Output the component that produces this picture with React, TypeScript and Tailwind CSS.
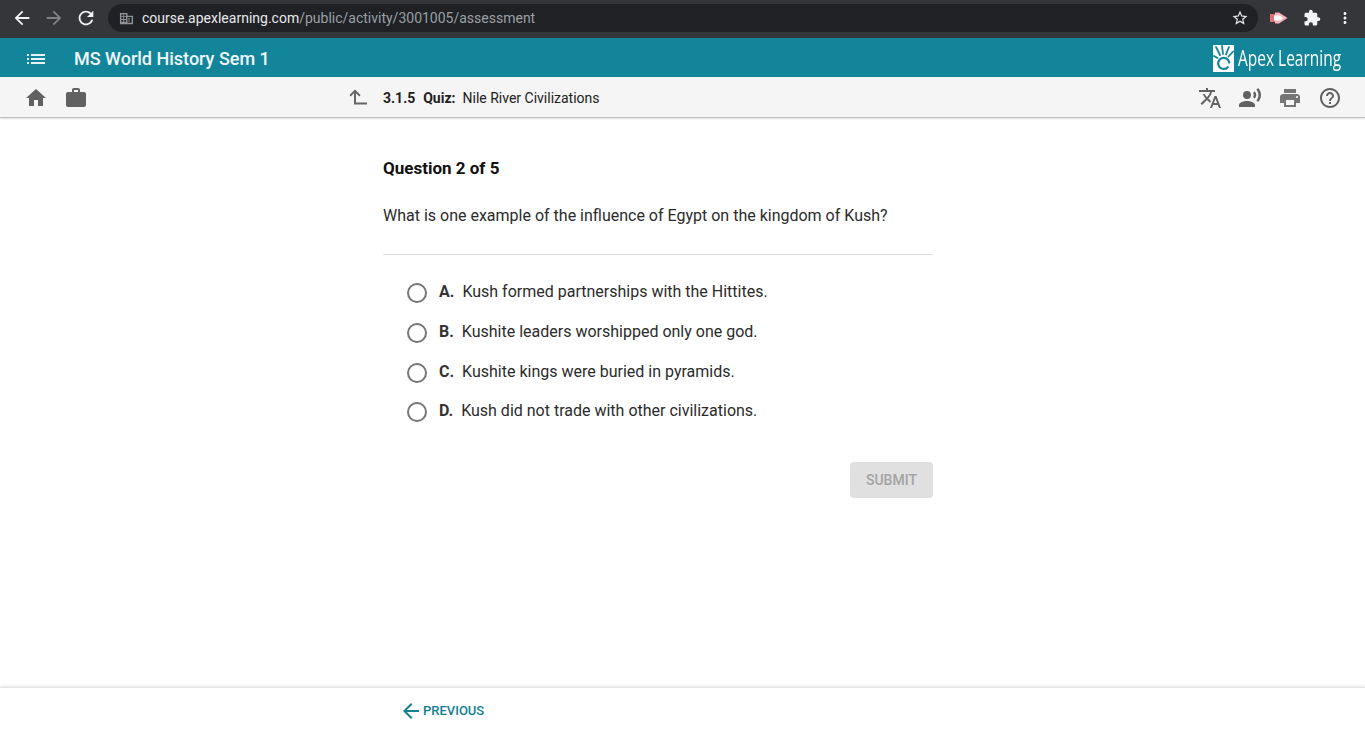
const options = [
  { letter: 'A.', text: 'Kush formed partnerships with the Hittites.' },
  { letter: 'B.', text: 'Kushite leaders worshipped only one god.' },
  { letter: 'C.', text: 'Kushite kings were buried in pyramids.' },
  { letter: 'D.', text: 'Kush did not trade with other civilizations.' },
];

function Icon({ d, className }: { d: string; className: string }) {
  return (
    <svg viewBox="0 0 24 24" className={className} fill="currentColor">
      <path d={d} />
    </svg>
  );
}

const paths = {
  back: 'M20 11H7.83l5.59-5.59L12 4l-8 8 8 8 1.41-1.41L7.83 13H20v-2z',
  forward: 'M12 4l-1.41 1.41L16.17 11H4v2h12.17l-5.58 5.59L12 20l8-8z',
  refresh:
    'M17.65 6.35C16.2 4.9 14.21 4 12 4c-4.42 0-7.99 3.58-7.99 8s3.57 8 7.99 8c3.73 0 6.84-2.55 7.73-6h-2.08c-.82 2.33-3.04 4-5.65 4-3.31 0-6-2.69-6-6s2.69-6 6-6c1.66 0 3.14.69 4.22 1.78L13 11h7V4l-2.35 2.35z',
  list: 'M3 13h2v-2H3v2zm0 4h2v-2H3v2zm0-8h2V7H3v2zm4 4h14v-2H7v2zm0 4h14v-2H7v2zM7 7v2h14V7H7z',
  home: 'M10 20v-6h4v6h5v-8h3L12 3 2 12h3v8z',
  work: 'M20 6h-4V4c0-1.11-.89-2-2-2h-4c-1.11 0-2 .89-2 2v2H4c-1.11 0-1.99.89-1.99 2L2 19c0 1.11.89 2 2 2h16c1.11 0 2-.89 2-2V8c0-1.11-.89-2-2-2zm-6 0h-4V4h4v2z',
  translate:
    'M12.87 15.07l-2.54-2.51.03-.03c1.74-1.94 2.98-4.17 3.71-6.53H17V4h-7V2H8v2H1v1.99h11.17C11.5 7.92 10.44 9.75 9 11.35 8.07 10.32 7.3 9.19 6.69 8h-2c.73 1.63 1.73 3.17 2.98 4.56l-5.09 5.02L4 19l5-5 3.11 3.11.76-2.04zM18.5 10h-2L12 22h2l1.12-3h4.75L21 22h2l-4.5-12zm-2.62 7l1.62-4.33L19.12 17h-3.24z',
  voice:
    'M5 9a4 4 0 1 0 8 0a4 4 0 1 0-8 0zM9 15c-2.67 0-8 1.34-8 4v2h16v-2c0-2.66-5.33-4-8-4zm7.76-9.64l-1.68 1.69c.84 1.18.84 2.71 0 3.89l1.68 1.69c2.02-2.02 2.02-5.07 0-7.27zM20.07 2l-1.63 1.63c2.77 3.02 2.77 7.56 0 10.74L20.07 16c3.9-3.89 3.91-9.95 0-14z',
  print:
    'M19 8H5c-1.66 0-3 1.34-3 3v6h4v4h12v-4h4v-6c0-1.66-1.34-3-3-3zm-3 11H8v-5h8v5zm3-7c-.55 0-1-.45-1-1s.45-1 1-1 1 .45 1 1-.45 1-1 1zm-1-9H6v4h12V3z',
  help: 'M11 18h2v-2h-2v2zm1-16C6.48 2 2 6.48 2 12s4.48 10 10 10 10-4.48 10-10S17.52 2 12 2zm0 18c-4.41 0-8-3.59-8-8s3.59-8 8-8 8 3.59 8 8-3.59 8-8 8zm0-14c-2.21 0-4 1.79-4 4h2c0-1.1.9-2 2-2s2 .9 2 2c0 2-3 1.75-3 5h2c0-2.25 3-2.5 3-5 0-2.21-1.79-4-4-4z',
  extension:
    'M20.5 11H19V7c0-1.1-.9-2-2-2h-4V3.5C13 2.12 11.88 1 10.5 1S8 2.12 8 3.5V5H4c-1.1 0-1.99.9-1.99 2v3.8H3.5c1.49 0 2.7 1.21 2.7 2.7s-1.21 2.7-2.7 2.7H2V20c0 1.1.9 2 2 2h3.8v-1.5c0-1.49 1.21-2.7 2.7-2.7 1.49 0 2.7 1.21 2.7 2.7V22H17c1.1 0 2-.9 2-2v-4h1.5c1.38 0 2.5-1.12 2.5-2.5S21.88 11 20.5 11z',
  star: 'M22 9.24l-7.19-.62L12 2 9.19 8.63 2 9.24l5.46 4.73L5.82 21 12 17.27 18.18 21l-1.63-7.03L22 9.24zM12 15.4l-3.76 2.27 1-4.28-3.32-2.88 4.38-.38L12 6.1l1.71 4.04 4.38.38-3.32 2.88 1 4.28L12 15.4z',
  dots: 'M12 8c1.1 0 2-.9 2-2s-.9-2-2-2-2 .9-2 2 .9 2 2 2zm0 2c-1.1 0-2 .9-2 2s.9 2 2 2 2-.9 2-2-.9-2-2-2zm0 6c-1.1 0-2 .9-2 2s.9 2 2 2 2-.9 2-2-.9-2-2-2z',
  up: 'M9 3.5L3.4 9.1l1.4 1.4L8 7.3V18.5h13v-2H10V7.3l3.2 3.2 1.4-1.4z',
};

function ApexLogo() {
  return (
    <svg viewBox="0 0 21 27" className="w-[21px] h-[27px] shrink-0">
      <rect width="21" height="27" fill="#ffffff" />
      <g stroke="#12859b" strokeWidth="1.8" strokeLinecap="round" fill="none">
        <path d="M7 10L3 2M10 9L9 1M13 9.5L16 2M15.5 11.5L20 6.5M4.5 13L1 11" />
        <path d="M14.8 22.2A5.6 5.6 0 1 1 16.2 17.5" strokeWidth="2.2" />
      </g>
    </svg>
  );
}

export default function App() {
  return (
    <div className="h-[734px] flex flex-col bg-white overflow-hidden font-['Roboto',sans-serif] text-[#212121]">
      <div className="h-[38px] shrink-0 bg-[#35363a] pb-[2px] flex items-center">
        <Icon d={paths.back} className="w-[22px] h-[22px] ml-[11px] text-[#f1f3f4]" />
        <Icon d={paths.forward} className="w-[22px] h-[22px] ml-[10px] text-[#7f8184]" />
        <Icon d={paths.refresh} className="w-[22px] h-[22px] ml-[10px] text-[#f1f3f4]" />
        <div className="ml-[11px] w-[1150px] h-7 rounded-full bg-[#202124] flex items-center">
          <svg viewBox="0 0 16 16" className="w-[15px] h-[15px] ml-[11px] text-[#8f9398]" fill="currentColor">
            <path d="M1 2h8v3h6v9H1zM2.5 3.5v2h2v-2zm3 0v2h2v-2zm-3 3v2h2v-2zm3 0v2h2v-2zm-3 3v2h2v-2zm3 0v2h2v-2zM9 6.5v6h4.5v-6zm1 1h1.5v1.5H10zm0 2.5h1.5v1.5H10z" />
          </svg>
          <span className="ml-2 text-sm text-[#e8eaed]">
            course.apexlearning.com<span className="text-[#9aa0a6]">/public/activity/3001005/assessment</span>
          </span>
          <Icon d={paths.star} className="w-[18px] h-[18px] ml-auto mr-[9px] text-[#e8eaed]" />
        </div>
        <svg viewBox="0 0 18 12" className="w-[18px] h-3 ml-[12px] blur-[0.6px]">
          <rect x="0" y="2" width="5" height="8" fill="#e0707a" />
          <path d="M5 0.5h4l8.5 5.5-8.5 5.5H5z" fill="#f3b6ba" />
          <path d="M4 3.5h6l3 2.5-3 2.5H4z" fill="#ffffff" />
        </svg>
        <Icon d={paths.extension} className="w-[18px] h-[18px] ml-[15px] text-[#f1f3f4]" />
        <Icon d={paths.dots} className="w-[18px] h-[18px] ml-[15px] text-[#f1f3f4]" />
      </div>

      <header className="h-[39px] shrink-0 bg-[#12859b] pt-[2px] flex items-center text-white">
        <Icon d={paths.list} className="w-6 h-6 ml-6 text-[#e6f3f5]" />
        <h1 className="ml-[26px] text-lg font-medium text-[#f0f8fa]">MS World History Sem 1</h1>
        <div className="ml-auto flex items-center w-[152px]">
          <ApexLogo />
          <span className="ml-1 text-[21px] leading-none inline-block w-[104px] whitespace-nowrap origin-left scale-x-[0.737] font-['Open_Sans',sans-serif]">
            Apex Learning
          </span>
        </div>
      </header>

      <nav className="h-[41px] shrink-0 bg-[#f5f5f5] border-b border-[#bdbdbd] shadow-[0_1px_2px_rgba(0,0,0,0.12)] pt-[2px] flex items-center text-[#616161]">
        <Icon d={paths.home} className="w-6 h-6 ml-6" />
        <Icon d={paths.work} className="w-6 h-6 ml-4" />
        <Icon d={paths.up} className="w-6 h-6 ml-[258px] text-[#666666]" />
        <div className="ml-[13px] flex items-center text-sm text-[#212121]">
          <span className="font-bold">3.1.5</span>
          <span className="ml-2 font-bold">Quiz:</span>
          <span className="ml-[7px]">Nile River Civilizations</span>
        </div>
        <div className="ml-auto mr-[23px] flex items-center gap-4">
          <Icon d={paths.translate} className="w-6 h-6" />
          <Icon d={paths.voice} className="w-6 h-6" />
          <Icon d={paths.print} className="w-6 h-6 text-[#757575]" />
          <Icon d={paths.help} className="w-6 h-6" />
        </div>
      </nav>

      <main className="flex-1 w-[550px] ml-[383px] pt-10">
        <h2 className="text-[17px] leading-5 font-bold text-[#111111]">Question 2 of 5</h2>
        <p className="mt-[28px] text-base leading-5 text-[#2b2b2b] pb-[28px] border-b border-[#dcdcdc]">
          What is one example of the influence of Egypt on the kingdom of Kush?
        </p>
        <ul className="mt-[18.4px] pl-6 flex flex-col">
          {options.map((o) => (
            <li key={o.letter} className="h-[39.67px] flex items-center">
              <span className="w-5 h-5 rounded-full border-2 border-[#757575] bg-white shrink-0" />
              <span className="ml-[12px] mb-[2px] text-base text-[#2b2b2b]">
                <span className="font-bold text-[#333333]">{o.letter}</span>
                <span className="ml-2">{o.text}</span>
              </span>
            </li>
          ))}
        </ul>
        <div className="mt-[30px] flex justify-end">
          <button className="w-[83px] h-9 rounded bg-[#e0e0e0] text-sm font-medium text-[#a3a3a3]">SUBMIT</button>
        </div>
      </main>

      <footer className="h-[47px] shrink-0 border-t border-[#e6e6e6] shadow-[0_-1px_3px_rgba(0,0,0,0.1)] flex items-center pl-[399px] text-[#12808f]">
        <Icon d={paths.back} className="w-6 h-6" />
        <span className="text-[13px] font-medium">PREVIOUS</span>
      </footer>
    </div>
  );
}
